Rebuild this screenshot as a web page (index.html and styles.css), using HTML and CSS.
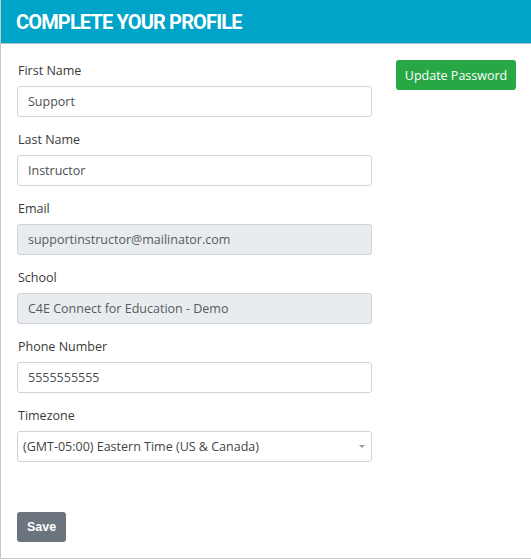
FILE: index.html
```html
<!DOCTYPE html>
<html>
<head>
<meta charset="utf-8">
<link rel="stylesheet" href="styles.css">
</head>
<body>
<div class="card">
  <div class="card-header">COMPLETE YOUR PROFILE</div>
  <div class="card-body">
    <div class="row">
      <form class="form-col">
        <div class="group">
          <label>First Name</label>
          <input class="field" type="text" value="Support">
        </div>
        <div class="group">
          <label>Last Name</label>
          <input class="field" type="text" value="Instructor">
        </div>
        <div class="group">
          <label>Email</label>
          <input class="field disabled" type="text" value="supportinstructor@mailinator.com" disabled>
        </div>
        <div class="group">
          <label>School</label>
          <input class="field disabled" type="text" value="C4E Connect for Education - Demo" disabled>
        </div>
        <div class="group">
          <label>Phone Number</label>
          <input class="field" type="text" value="5555555555">
        </div>
        <div class="group">
          <label>Timezone</label>
          <div class="select">
            <span>(GMT-05:00) Eastern Time (US &amp; Canada)</span>
            <span class="arrow"></span>
          </div>
        </div>
        <button type="button" class="btn btn-save">Save</button>
      </form>
      <div class="side-col">
        <button type="button" class="btn btn-green">Update Password</button>
      </div>
    </div>
  </div>
</div>
</body>
</html>
```
FILE: styles.css
```css
* { box-sizing: border-box; }
html, body { margin: 0; padding: 0; background: #fff; }
body { font-family: "Open Sans", "Noto Sans", sans-serif; color: #333; }
.card {
  width: 540px;
  height: 559px;
  border-left: 1px solid #c8c8c8;
  border-bottom: 1px solid #c8c8c8;
  display: flex;
  flex-direction: column;
}
.card-header {
  height: 45px;
  background: #00a4c9;
  border-bottom: 1px solid #b9c3c7;
  color: #fff;
  font-family: "Roboto", "Liberation Sans", sans-serif;
  font-weight: 700;
  font-size: 20px;
  letter-spacing: -0.85px;
  padding: 10px 0 0 15px;
  line-height: 24px;
}
.card-body { padding: 16px 16px 16px 16px; flex: 1; }
.row { display: flex; }
.form-col { width: 355px; display: flex; flex-direction: column; padding-top: 1px; }
.side-col { padding-left: 24px; padding-top: 0; }
.group { display: flex; flex-direction: column; margin-bottom: 13px; }
label {
  font-size: 12.5px;
  line-height: 20px;
  margin-bottom: 5px;
  color: #3a3a3a;
  padding-left: 1px;
}
.field {
  height: 31px;
  border: 1px solid #ced4da;
  border-radius: 3px;
  padding: 0 10px;
  font-family: "Open Sans", "Noto Sans", sans-serif;
  font-size: 12.5px;
  color: #4a4f55;
  background: #fff;
}
.field.disabled { background: #e9ecef; color: #555b61; }
.select {
  height: 31px;
  border: 1px solid #ced4da;
  border-radius: 3px;
  padding: 0 6px 0 5px;
  font-size: 12.5px;
  color: #444;
  display: flex;
  align-items: center;
  justify-content: space-between;
}
.arrow {
  width: 0; height: 0;
  border-left: 3px solid transparent;
  border-right: 3px solid transparent;
  border-top: 3px solid #999;
}
.btn {
  border: none;
  border-radius: 3px;
  color: #fff;
  cursor: pointer;
  height: 30px;
}
.btn-save {
  margin-top: 37px;
  align-self: flex-start;
  width: 49px;
  background: #6c757d;
  font-family: "Liberation Sans", Arial, sans-serif;
  font-weight: 700;
  font-size: 12.5px;
}
.btn-green {
  margin-top: 0;
  width: 120px;
  background: #28a745;
  font-family: "Open Sans", "Noto Sans", sans-serif;
  font-size: 12.5px;
  font-weight: 500;
}
```
